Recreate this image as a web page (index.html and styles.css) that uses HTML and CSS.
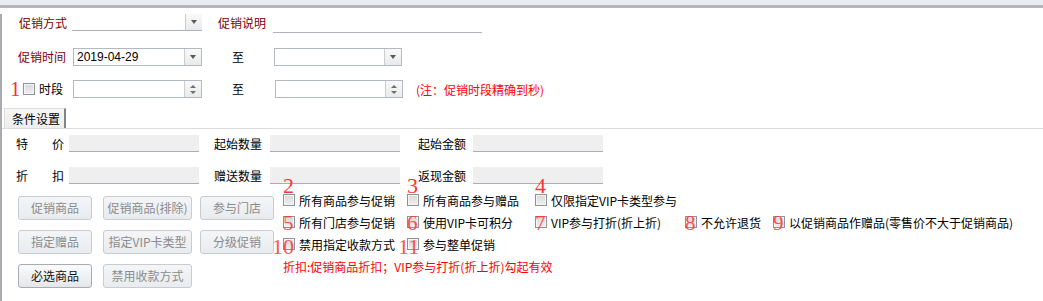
FILE: index.html
```html
<!DOCTYPE html>
<html>
<head>
<meta charset="utf-8">
<link rel="stylesheet" href="styles.css">
</head>
<body>
<div class="top"></div>
<div class="frame">
  <div class="row r1">
    <span class="lbl red w48">促销方式</span>
    <div class="combo flat ml5 w130"><span class="val"></span><span class="dd"><i class="tri"></i></span></div>
    <span class="lbl red w48 ml16">促销说明</span>
    <div class="uline"></div>
  </div>
  <div class="row r2">
    <span class="lbl red w48">促销时间</span>
    <div class="combo box ml7 w129"><span class="val">2019-04-29</span><span class="dd"><i class="tri"></i></span></div>
    <span class="lbl zhi">至</span>
    <div class="combo box ml30 w128"><span class="val"></span><span class="dd"><i class="tri"></i></span></div>
  </div>
  <div class="row r3">
    <span class="num1">1</span>
    <span class="cb ml5"></span>
    <span class="lbl ml4">时段</span>
    <div class="combo box ml10 w129"><span class="val"></span><span class="spin"><i class="up"></i><i class="down"></i></span></div>
    <span class="lbl zhi">至</span>
    <div class="combo box ml31 w128"><span class="val"></span><span class="spin"><i class="up"></i><i class="down"></i></span></div>
    <span class="note">(注：促销时段精确到秒)</span>
  </div>

  <div class="tabbar"><div class="tab">条件设置</div></div>

  <div class="frow f1">
    <span class="lbl c1">特</span><span class="lbl c2">价</span>
    <div class="fin ml5"></div>
    <span class="lbl w48 ml15">起始数量</span>
    <div class="fin ml8"></div>
    <span class="lbl w48 ml18">起始金额</span>
    <div class="fin ml7"></div>
  </div>
  <div class="frow f2">
    <span class="lbl c1">折</span><span class="lbl c2">扣</span>
    <div class="fin ml5"></div>
    <span class="lbl w48 ml15">赠送数量</span>
    <div class="fin ml8"></div>
    <span class="lbl w48 ml18">返现金额</span>
    <div class="fin ml7"></div>
  </div>

  <div class="lower">
    <div class="btns">
      <div class="brow">
        <button class="btn b74">促销商品</button>
        <button class="btn b89 ml11">促销商品(排除)</button>
        <button class="btn b74 ml8">参与门店</button>
      </div>
      <div class="brow">
        <button class="btn b74">指定赠品</button>
        <button class="btn b89 ml11">指定VIP卡类型</button>
        <button class="btn b74 ml8">分级促销</button>
      </div>
      <div class="brow">
        <button class="btn b74 on">必选商品</button>
        <button class="btn b89 ml11">禁用收款方式</button>
      </div>
    </div>
    <div class="checks">
      <div class="ck"><span class="cb"><b class="n above">2</b></span><span>所有商品参与促销</span></div>
      <div class="ck"><span class="cb"><b class="n above">3</b></span><span>所有商品参与赠品</span></div>
      <div class="ck"><span class="cb"><b class="n above">4</b></span><span>仅限指定VIP卡类型参与</span></div>
      <div class="ck"></div>
      <div class="ck"></div>

      <div class="ck"><span class="cb"><b class="n over">5</b></span><span>所有门店参与促销</span></div>
      <div class="ck"><span class="cb"><b class="n over">6</b></span><span>使用VIP卡可积分</span></div>
      <div class="ck"><span class="cb"><b class="n over">7</b></span><span>VIP参与打折(折上折)</span></div>
      <div class="ck"><span class="cb"><b class="n over">8</b></span><span>不允许退货</span></div>
      <div class="ck"><span class="cb"><b class="n over">9</b></span><span>以促销商品作赠品(零售价不大于促销商品)</span></div>

      <div class="ck"><span class="cb"><b class="n over two">10</b></span><span>禁用指定收款方式</span></div>
      <div class="ck"><span class="cb"><b class="n over two t11">11</b></span><span>参与整单促销</span></div>
      <div class="ck"></div>
      <div class="ck"></div>
      <div class="ck"></div>

      <div class="tip">折扣:促销商品折扣；VIP参与打折(折上折)勾起有效</div>
    </div>
  </div>
</div>
</body>
</html>
```

FILE: styles.css
```css
* { box-sizing: border-box; }
html, body { margin: 0; padding: 0; }
body {
  width: 1043px;
  height: 301px;
  overflow: hidden;
  background: #fff;
  font-family: "Noto Sans CJK SC", "Liberation Sans", sans-serif;
  font-size: 12px;
  color: #000;
}
.top {
  height: 8px;
  background: #e9ecef;
  border-bottom: 3px solid #b3b7bb;
}
.frame {
  height: 292px;
  border-left: 2px solid #a8acb0;
  border-bottom: 2px solid #8e9296;
  position: relative;
}
.row { display: flex; align-items: center; }
.r1 { height: 17px; margin-top: 6px; padding-left: 17px; }
.r2 { height: 18px; margin-top: 17px; padding-left: 16px; }
.r3 { height: 18px; margin-top: 14px; padding-left: 8px; }

.lbl { line-height: 14px; white-space: nowrap; }
.red { color: #800000; }
.w48 { width: 48px; }
.ml4 { margin-left: 4px; } .ml5 { margin-left: 5px; } .ml7 { margin-left: 7px; }
.ml8 { margin-left: 8px; } .ml10 { margin-left: 10px; } .ml11 { margin-left: 11px; }
.ml15 { margin-left: 15px; } .ml16 { margin-left: 16px; } .ml18 { margin-left: 18px; }
.ml30 { margin-left: 30px; } .ml31 { margin-left: 31px; }
.w128 { width: 128px; } .w129 { width: 129px; } .w130 { width: 130px; }
.zhi { margin-left: 30px; width: 12px; }

.combo { display: flex; height: 100%; background: #fff; }
.combo .val {
  flex: 1;
  padding-left: 3px;
  font-family: "Liberation Sans", sans-serif;
  font-size: 12px;
  line-height: 16px;
}
.combo.flat { border-bottom: 1px solid #aeb3ba; }
.combo.box { border: 1px solid #b3b9c0; }
.dd, .spin {
  width: 17px;
  border-left: 1px solid #c9cdd2;
  background: linear-gradient(#f9f9f9, #e9eaeb);
  display: flex;
  align-items: center;
  justify-content: center;
}
.spin { flex-direction: column; gap: 3px; }
.tri {
  width: 0; height: 0;
  border-left: 3.5px solid transparent;
  border-right: 3.5px solid transparent;
  border-top: 4px solid #555a60;
}
.up {
  width: 0; height: 0;
  border-left: 3px solid transparent;
  border-right: 3px solid transparent;
  border-bottom: 3px solid #6a6f75;
}
.down {
  width: 0; height: 0;
  border-left: 3px solid transparent;
  border-right: 3px solid transparent;
  border-top: 3px solid #6a6f75;
}
.uline {
  margin-left: 7px;
  width: 209px;
  height: 17px;
  border-bottom: 1px solid #aeb3ba;
  margin-top: 3px;
}
.num1 {
  font-family: "Liberation Serif", serif;
  font-size: 21px;
  color: #ff2a2a;
  width: 8px;
  line-height: 18px;
}
.note {
  margin-left: 13px;
  color: #ff0000;
  white-space: nowrap;
}

.cb {
  position: relative;
  display: inline-block;
  flex: none;
  width: 12px;
  height: 12px;
  border: 1px solid #8d9399;
  background: linear-gradient(#d8d8d8, #efefef);
  box-shadow: inset 0 0 0 1px #f6f6f6;
}

.tabbar {
  margin-top: 10px;
  height: 21px;
  border-bottom: 1px solid #dcdcdc;
  padding-left: 2px;
}
.tab {
  width: 62px;
  height: 20px;
  background: linear-gradient(#f6f6f6, #eeeeee);
  border-top: 1px solid #dedede;
  border-left: 1px solid #dedede;
  border-right: 2px solid #80858a;
  padding-left: 7px;
  line-height: 19px;
}

.frow { display: flex; align-items: center; height: 17px; padding-left: 14px; }
.f1 { margin-top: 6px; }
.f2 { margin-top: 15px; }
.c1 { width: 12px; }
.c2 { width: 12px; margin-left: 24px; }
.fin {
  width: 130px;
  height: 17px;
  background: #efefef;
  border-bottom: 1px solid #a9aeb4;
}

.lower { display: flex; margin-top: 5px; }
.btns { width: 281px; flex: none; padding-left: 16px; padding-top: 7px; }
.brow { display: flex; height: 24px; margin-bottom: 10px; }
.btn {
  height: 24px;
  padding: 0;
  border: 1px solid #c8ccd1;
  border-radius: 3px;
  background: linear-gradient(#f3f5f7, #e9ecef);
  color: #8b8b8b;
  font-family: "Noto Sans CJK SC", "Liberation Sans", sans-serif;
  font-size: 12px;
  line-height: 20px;
  white-space: nowrap;
}
.b74 { width: 74px; }
.b89 { width: 89px; }
.btn.on {
  color: #111;
  border-color: #a7acb2;
  background: linear-gradient(#fbfbfb, #e4e6e8);
}

.checks {
  display: grid;
  grid-template-columns: 124px 128px 150px 88px 250px;
  grid-auto-rows: 22px;
}
.ck { display: flex; align-items: center; gap: 4px; white-space: nowrap; }
.tip { grid-column: 1 / 6; color: #ff0000; display: flex; align-items: center; white-space: nowrap; }

.n {
  position: absolute;
  font-family: "Liberation Serif", serif;
  font-weight: normal;
  font-size: 21px;
  line-height: 14px;
  color: #ff3535;
}
.n.above { left: -1px; top: -16px; font-size: 22px; }
.n.over { left: -1px; top: -1px; opacity: 0.85; }
.n.two { left: -12px; top: 1px; font-size: 22px; }
.n.t11 { left: -10px; }
```
